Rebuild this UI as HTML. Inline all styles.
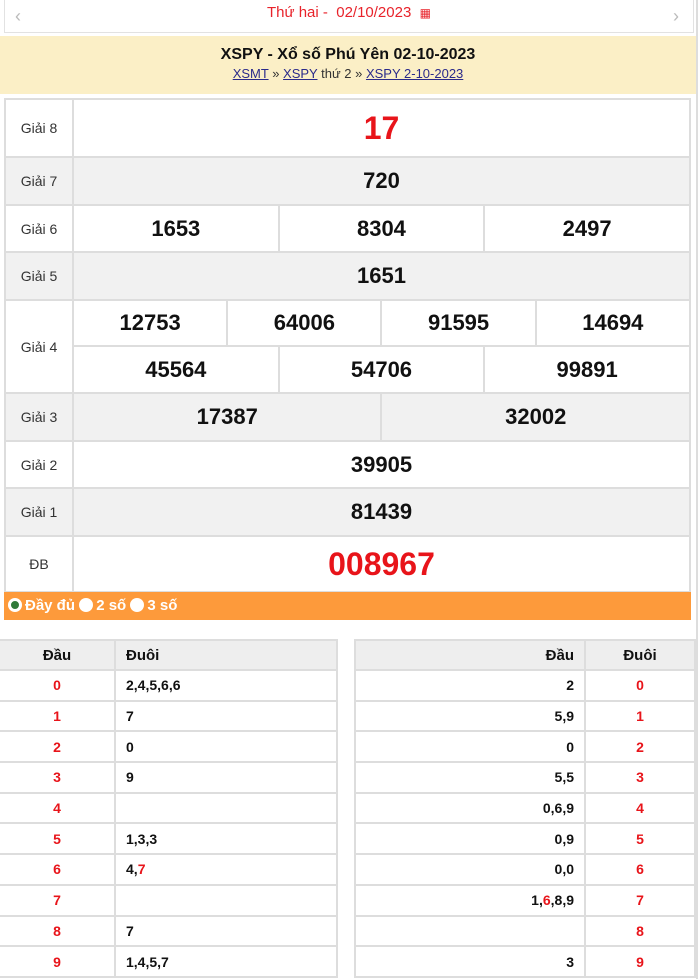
<!DOCTYPE html>
<html><head><meta charset="utf-8"><style>
*{margin:0;padding:0;box-sizing:border-box}
body{width:700px;height:979px;background:#fff;font-family:"Liberation Sans",Arial,sans-serif;position:relative;overflow:hidden}
.top{position:absolute;left:4px;top:0;width:690px;height:33px;border:1px solid #e2e2e2;border-top:none;background:#fff;text-align:center;color:#e8232b;font-size:15px;line-height:26px}
.top .a{position:absolute;top:3px;color:#bbb;font-size:18px}
.vline{position:absolute;left:696px;top:0;width:2px;height:979px;background:#ddd}
.hdr{position:absolute;left:0;top:36px;width:696px;height:58px;background:#fbefc6;text-align:center}
.hdr b{display:block;font-size:16px;margin-top:10px;color:#111}
.hdr div{font-size:13px;color:#333;margin-top:2px}
.hdr u{color:#2a2a8a}
table.kq{position:absolute;left:4px;top:98px;width:687px;border-collapse:collapse;table-layout:fixed}
.kq td{border:2px solid #ddd;text-align:center;font-weight:bold;font-size:22px;color:#111}
.kq td.l{font-weight:normal;font-size:14px;color:#333}
.g{background:#f1f1f1}
.red{color:#e8141a!important}
.bar{position:absolute;left:4px;top:592px;width:687px;height:28px;background:#fd9a3b;color:#fff;font-weight:bold;font-size:15px;line-height:28px;padding-left:4px}
.dot{display:inline-block;width:14px;height:14px;border-radius:50%;background:#fff;vertical-align:-2px;margin-right:3px}
.dot.s{background:#2f7a3a;border:3px solid #fff}
table.lt{position:absolute;top:639px;border-collapse:collapse;font-size:14px;font-weight:bold;color:#111}
.lt td,.lt th{border:2px solid #ddd;height:30.7px}
.lt th{background:#eee;height:30px;font-size:15px}
.r{color:#e8141a}
</style></head><body>
<div class="vline"></div>
<div class="top"><span class="a" style="left:10px">&#8249;</span>Thứ hai -&nbsp; 02/10/2023 &nbsp;<span style="font-size:12px">&#9638;</span><span class="a" style="right:14px">&#8250;</span></div>
<div class="hdr"><b>XSPY - Xổ số Phú Yên 02-10-2023</b><div><u>XSMT</u> » <u>XSPY</u> thứ 2 » <u>XSPY 2-10-2023</u></div></div>
<table class="kq">
<colgroup><col style="width:68px"><col span="12" style="width:51.4px"></colgroup>
<tr style="height:58px"><td class="l">Giải 8</td><td colspan="12" class="red" style="font-size:32px">17</td></tr>
<tr style="height:48px" class="g"><td class="l">Giải 7</td><td colspan="12">720</td></tr>
<tr style="height:47px"><td class="l">Giải 6</td><td colspan="4">1653</td><td colspan="4">8304</td><td colspan="4">2497</td></tr>
<tr style="height:48px" class="g"><td class="l">Giải 5</td><td colspan="12">1651</td></tr>
<tr style="height:46px"><td class="l" rowspan="2">Giải 4</td><td colspan="3">12753</td><td colspan="3">64006</td><td colspan="3">91595</td><td colspan="3">14694</td></tr>
<tr style="height:47px"><td colspan="4">45564</td><td colspan="4">54706</td><td colspan="4">99891</td></tr>
<tr style="height:48px" class="g"><td class="l">Giải 3</td><td colspan="6">17387</td><td colspan="6">32002</td></tr>
<tr style="height:47px"><td class="l">Giải 2</td><td colspan="12">39905</td></tr>
<tr style="height:48px" class="g"><td class="l">Giải 1</td><td colspan="12">81439</td></tr>
<tr style="height:56px"><td class="l">ĐB</td><td colspan="12" class="red" style="font-size:32px">008967</td></tr>
</table>
<div class="bar"><span class="dot s"></span>Đầy đủ <span class="dot"></span>2 số <span class="dot"></span>3 số</div>
<table class="lt" style="left:-2px;width:340px">
<tr><th style="width:116px">Đầu</th><th style="text-align:left;padding-left:10px">Đuôi</th></tr>
<tr><td align="center" class="r">0</td><td style="padding-left:10px">2,4,5,6,6</td></tr>
<tr><td align="center" class="r">1</td><td style="padding-left:10px">7</td></tr>
<tr><td align="center" class="r">2</td><td style="padding-left:10px">0</td></tr>
<tr><td align="center" class="r">3</td><td style="padding-left:10px">9</td></tr>
<tr><td align="center" class="r">4</td><td></td></tr>
<tr><td align="center" class="r">5</td><td style="padding-left:10px">1,3,3</td></tr>
<tr><td align="center" class="r">6</td><td style="padding-left:10px">4,<span class="r">7</span></td></tr>
<tr><td align="center" class="r">7</td><td></td></tr>
<tr><td align="center" class="r">8</td><td style="padding-left:10px">7</td></tr>
<tr><td align="center" class="r">9</td><td style="padding-left:10px">1,4,5,7</td></tr>
</table>
<table class="lt" style="left:354px;width:342px">
<tr><th style="text-align:right;padding-right:10px">Đầu</th><th style="width:110px">Đuôi</th></tr>
<tr><td align="right" style="padding-right:10px">2</td><td align="center" class="r">0</td></tr>
<tr><td align="right" style="padding-right:10px">5,9</td><td align="center" class="r">1</td></tr>
<tr><td align="right" style="padding-right:10px">0</td><td align="center" class="r">2</td></tr>
<tr><td align="right" style="padding-right:10px">5,5</td><td align="center" class="r">3</td></tr>
<tr><td align="right" style="padding-right:10px">0,6,9</td><td align="center" class="r">4</td></tr>
<tr><td align="right" style="padding-right:10px">0,9</td><td align="center" class="r">5</td></tr>
<tr><td align="right" style="padding-right:10px">0,0</td><td align="center" class="r">6</td></tr>
<tr><td align="right" style="padding-right:10px">1,<span class="r">6</span>,8,9</td><td align="center" class="r">7</td></tr>
<tr><td></td><td align="center" class="r">8</td></tr>
<tr><td align="right" style="padding-right:10px">3</td><td align="center" class="r">9</td></tr>
</table>
</body></html>
